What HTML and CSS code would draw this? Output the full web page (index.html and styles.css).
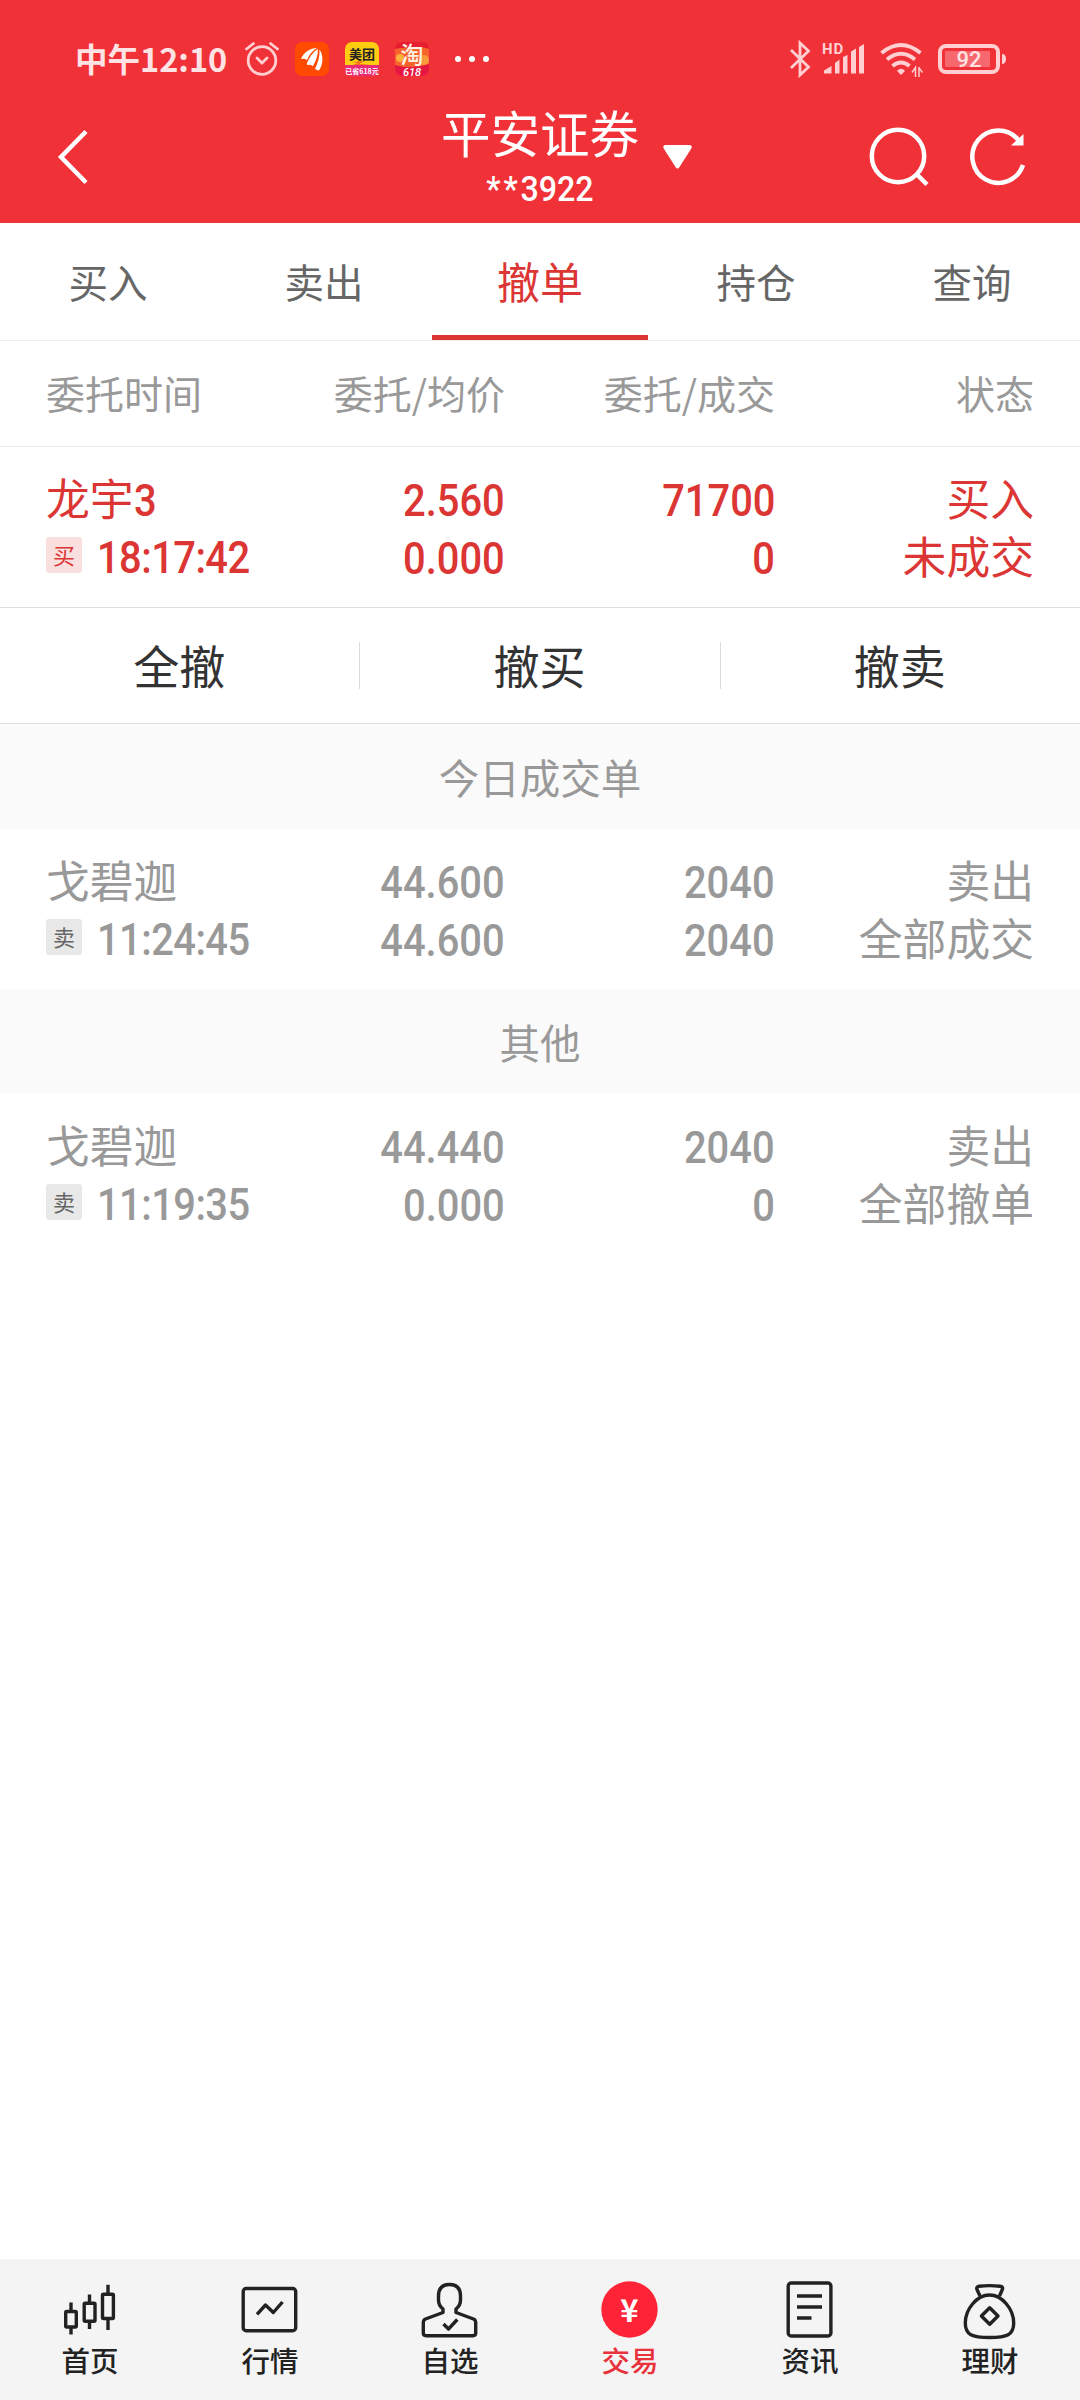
FILE: index.html
```html
<!DOCTYPE html>
<html lang="zh-CN">
    <head>
        <meta charset="utf-8">
        <title>平安证券</title>
        <link rel="stylesheet" href="styles.css">
    </head>
    <body>

        <div class="app">

            <header class="header">

                <div class="status-bar">
                    <span class="clock">中午12:10</span>

                    <svg class="alarm" width="36" height="36" viewBox="0 0 36 36">
                        <circle cx="18" cy="19.500" r="13.800"/>
                        <path d="M2.500 8 L9.500 2.500 M33.500 8 L26.500 2.500 M13 17 L18 22 L23 17"/>
                    </svg>

                    <svg class="app-icon" width="34" height="34" viewBox="0 0 34 34">
                        <rect width="34" height="34" rx="7" fill="#ff4a00"/>
                        <path d="M6 17 C9 10 15 6 22 6 C17 9 14 13 12 18 Q9 16 6 17 Z M12 21 C15 14 19 9 23 7 C23 13 21 19 18 24 Q15 22 12 23 Z M20 27 C23 21 25 14 24.500 7.500 C28 12 29 21 24 28.500 Q22 28 20 27 Z" fill="#fff"/>
                    </svg>

                    <svg class="app-icon" width="34" height="34" viewBox="0 0 34 34">
                        <rect width="34" height="34" rx="7" fill="#fc1"/>
                        <path d="M0 23 H34 V27 Q34 34 27 34 H7 Q0 34 0 27 Z" fill="#e92a76"/>
                        <path d="M7 20 L20 19 L14 22 L26 23 H8 L13 21 Z" fill="#f26a1c"/>
                        <text x="17" y="17" class="mt-name">美团</text>
                        <text x="17" y="32" class="mt-sale">已省618元</text>
                    </svg>

                    <svg class="app-icon" width="34" height="34" viewBox="0 0 34 34">
                        <rect width="34" height="34" rx="7" fill="#f7632c"/>
                        <path d="M0 7 Q0 0 7 0 H27 Q34 0 34 7 L26 5 L6 6 Z" fill="#e71d30"/>
                        <circle cx="5" cy="16" r="4" fill="#fbb03c"/>
                        <circle cx="29" cy="18" r="5" fill="#fb9a3c"/>
                        <path d="M0 23 Q17 28 34 22 V27 Q34 34 27 34 H7 Q0 34 0 27 Z" fill="#e51740"/>
                        <text x="17" y="21" class="tb-name">淘</text>
                        <text x="17" y="33.500" class="tb-sale">618</text>
                    </svg>

                    <div class="more"><i></i><i></i><i></i></div>

                    <div class="status-right">
                        <svg class="bluetooth" width="22" height="36" viewBox="0 0 22 36">
                            <path d="M2 9 L19.500 26 L11 34 V2 L19.500 10 L2 27"/>
                        </svg>

                        <svg class="signal" width="42" height="36" viewBox="0 0 42 36">
                            <text x="-1" y="12.500">HD</text>
                            <path d="M1 32.500 V29.500 L8.500 25 V32.500 Z M12 32.500 V22 L16.500 18.500 V32.500 Z M20 32.500 V16 L24.500 14 V32.500 Z M28 32.500 V10.500 L33 7.500 V32.500 Z M36 32.500 V6 L41 3 V32.500 Z"/>
                        </svg>

                        <svg class="wifi" width="44" height="36" viewBox="0 0 44 36">
                            <path d="M1.500 12 Q21 -4 40.500 12 M7 18.500 Q21 7 35 18.500 M12.500 25 Q21 18 29.500 25"/>
                            <path class="solid" d="M17 30 Q21 25.500 25 30 L21 34 Z"/>
                            <path class="thin" d="M35.500 36 V26.500 L32 31.500 M39 26 V36 M39 27 L42.500 31.500"/>
                        </svg>

                        <svg class="battery" width="69" height="32" viewBox="0 0 69 32">
                            <rect x="2" y="3" width="58" height="26" rx="6"/>
                            <rect class="charge" x="7" y="8" width="45" height="16" rx="1"/>
                            <path class="solid" d="M64 11 Q68 11 68 16 Q68 21 64 21 Z"/>
                            <text x="31" y="24">92</text>
                        </svg>
                    </div>
                </div>

                <div class="title-bar">
                    <div class="title-left">
                        <svg width="32" height="56" viewBox="0 0 32 56">
                            <path d="M29 2.500 L4 28 L29 53.500"/>
                        </svg>
                    </div>

                    <div class="title">
                        <h1 class="broker">平安证券</h1>
                        <p class="account"><span class="mask">**</span>3922</p>
                    </div>

                    <div class="title-right">
                        <svg class="caret" width="29" height="24" viewBox="0 0 29 24">
                            <path d="M2 0 H27 Q30 1 28 4 L16.500 22 Q14.500 25 12.500 22 L1 4 Q-1 1 2 0 Z"/>
                        </svg>
                        <svg class="search" width="60" height="60" viewBox="0 0 60 60">
                            <circle cx="29" cy="29" r="26.200"/>
                            <path d="M47.500 47 L58 57.500"/>
                        </svg>
                        <svg class="refresh" width="60" height="60" viewBox="0 0 60 60">
                            <path d="M54 38 A26 26.200 0 1 1 49 12.500"/>
                            <path class="solid" d="M54.500 7 V18.500 H42 Z"/>
                        </svg>
                    </div>
                </div>

            </header>

            <nav class="tabs">
                <a class="tab">买入</a>
                <a class="tab">卖出</a>
                <a class="tab tab-active">撤单</a>
                <a class="tab">持仓</a>
                <a class="tab">查询</a>
            </nav>

            <div class="columns">
                <span>委托时间</span>
                <span>委托/均价</span>
                <span>委托/成交</span>
                <span>状态</span>
            </div>

            <div class="order order-buy">
                <div class="cell">
                    <p>龙宇<b>3</b></p>
                    <p class="time"><i class="badge">买</i><b>18:17:42</b></p>
                </div>
                <div class="cell">
                    <p><b>2.560</b></p>
                    <p><b>0.000</b></p>
                </div>
                <div class="cell">
                    <p><b>71700</b></p>
                    <p><b>0</b></p>
                </div>
                <div class="cell">
                    <p>买入</p>
                    <p>未成交</p>
                </div>
            </div>

            <div class="actions">
                <button class="action">全撤</button>
                <button class="action">撤买</button>
                <button class="action">撤卖</button>
            </div>

            <h2 class="section">今日成交单</h2>

            <div class="order">
                <div class="cell">
                    <p>戈碧迦</p>
                    <p class="time"><i class="badge">卖</i><b>11:24:45</b></p>
                </div>
                <div class="cell">
                    <p><b>44.600</b></p>
                    <p><b>44.600</b></p>
                </div>
                <div class="cell">
                    <p><b>2040</b></p>
                    <p><b>2040</b></p>
                </div>
                <div class="cell">
                    <p>卖出</p>
                    <p>全部成交</p>
                </div>
            </div>

            <h2 class="section">其他</h2>

            <div class="order">
                <div class="cell">
                    <p>戈碧迦</p>
                    <p class="time"><i class="badge">卖</i><b>11:19:35</b></p>
                </div>
                <div class="cell">
                    <p><b>44.440</b></p>
                    <p><b>0.000</b></p>
                </div>
                <div class="cell">
                    <p><b>2040</b></p>
                    <p><b>0</b></p>
                </div>
                <div class="cell">
                    <p>卖出</p>
                    <p>全部撤单</p>
                </div>
            </div>

            <nav class="bottom-nav">
                <a class="nav-item">
                    <svg width="60" height="60" viewBox="0 0 60 60">
                        <path d="M11 24.500 V33 M11 49 V56.500 M29.500 16.500 V25 M29.500 43 V51 M48 6.700 V16 M48 41 V52"/>
                        <rect x="5.700" y="33.500" width="10.600" height="15.500" rx="1"/>
                        <rect x="24.200" y="25.200" width="10.800" height="18" rx="1"/>
                        <rect x="42.500" y="16.200" width="10.900" height="24.300" rx="1"/>
                    </svg>
                    <span>首页</span>
                </a>
                <a class="nav-item">
                    <svg width="60" height="60" viewBox="0 0 60 60">
                        <rect x="3.200" y="10.500" width="52.500" height="42.200" rx="3"/>
                        <path d="M17 36.300 L25.500 27 L33.300 34.500 L42.500 24"/>
                    </svg>
                    <span>行情</span>
                </a>
                <a class="nav-item">
                    <svg width="60" height="60" viewBox="0 0 60 60">
                        <path d="M36 34.500 V31 Q40.500 27.500 40.500 22 V18 Q40.500 6.500 29.500 6.500 Q18.500 6.500 18.500 18 V22 Q18.500 27.500 23 31 V34.500 L5.500 41 Q3.300 42 3.300 44.500 V55 Q3.300 57.700 6 57.700 H53 Q55.700 57.700 55.700 55 V44.500 Q55.700 42 53.500 41 Z"/>
                        <path d="M23.500 46 L28.500 51 L37.300 41.500"/>
                    </svg>
                    <span>自选</span>
                </a>
                <a class="nav-item nav-active">
                    <svg width="60" height="60" viewBox="0 0 60 60">
                        <circle cx="29.500" cy="31.500" r="28.200"/>
                        <text x="29.500" y="43.500">¥</text>
                    </svg>
                    <span>交易</span>
                </a>
                <a class="nav-item">
                    <svg width="60" height="60" viewBox="0 0 60 60">
                        <rect x="8.200" y="5" width="42.700" height="53" rx="3"/>
                        <path d="M17 18 H42 M17 29 H42 M17 40 H31.500"/>
                    </svg>
                    <span>资讯</span>
                </a>
                <a class="nav-item">
                    <svg width="60" height="60" viewBox="0 0 60 60">
                        <path d="M20 18 L17 11.500 Q16 8.800 19 8.300 Q29.500 7 40 8.300 Q43.500 8.800 42.300 11.500 L39.500 18"/>
                        <path d="M29.500 17 C17 17 5.300 31 5.300 45 C5.300 57 12 59.500 29.500 59.500 C47 59.500 53.700 57 53.700 45 C53.700 31 42 17 29.500 17 Z"/>
                        <path d="M29.700 29.700 L38 38 L29.700 46.300 L21.400 38 Z"/>
                    </svg>
                    <span>理财</span>
                </a>
            </nav>

        </div>

    </body>
</html>
```

FILE: styles.css
```css
*{
    margin: 0;
    padding: 0;
    box-sizing: border-box;
}

body{
    background: #fff;
    font-family: "Noto Sans CJK SC", sans-serif;
    color: #999;
}

svg{
    display: block;
    overflow: visible;
    fill: none;
}

h1, h2, i{
    font-weight: normal;
    font-style: normal;
}

.app{
    width: 1080px;
    min-height: 2400px;
    display: flex;
    flex-direction: column;
}

/* red header */

.header{
    height: 223px;
    background: #f13138;
    color: #fff;
}

.status-bar{
    height: 90px;
    padding: 28px 73px 0 75px;
    display: flex;
    align-items: center;
}

.clock{
    width: 169px;
    margin-top: -2px;
    font-size: 32.500px;
    font-weight: 700;
    line-height: 40px;
    color: #ffe3e4;
}

.alarm{
    stroke: #ffcfd1;
    stroke-width: 2.8;
    stroke-linecap: round;
    margin-right: 15px;
}

.app-icon{
    margin-right: 16px;
}

.mt-name{
    font-size: 13px;
    font-weight: 700;
    text-anchor: middle;
    fill: #222;
}

.mt-sale{
    font-size: 7px;
    font-weight: 700;
    text-anchor: middle;
    fill: #fff;
}

.tb-name{
    font-size: 23px;
    font-weight: 500;
    text-anchor: middle;
    fill: #fff3e6;
}

.tb-sale{
    font: italic 500 11px Roboto, sans-serif;
    text-anchor: middle;
    fill: #fff;
}

.more{
    display: flex;
    gap: 8px;
    margin-left: 10px;
}

.more i{
    width: 6px;
    height: 6px;
    border-radius: 50%;
    background: #fff;
}

.status-right{
    margin-left: auto;
    display: flex;
    align-items: center;
}

.bluetooth{
    stroke: #ffcfd1;
    stroke-width: 2.8;
    margin-right: 12px;
}

.signal{
    fill: #ffcfd1;
    margin-right: 15px;
}

.signal text{
    font: 700 15px Roboto, sans-serif;
    letter-spacing: 1px;
}

.wifi{
    stroke: #ffcfd1;
    stroke-width: 4;
    margin-right: 14px;
}

.solid{
    fill: #ffcfd1;
    stroke: none;
}

.wifi .thin{
    stroke-width: 1.5;
}

.battery{
    stroke: #ffcfd1;
    stroke-width: 4;
}

.battery .charge{
    fill: #f6686e;
    stroke: none;
}

.battery text{
    font: 500 22px Roboto, sans-serif;
    text-anchor: middle;
    fill: #ffe3e4;
    stroke: none;
}

.title-bar{
    height: 133px;
    display: grid;
    grid-template-columns: 1fr auto 1fr;
    align-items: center;
}

.title-left{
    padding-left: 57px;
}

.title-left svg, .title-right svg{
    stroke: #fff;
    stroke-width: 4.5;
}

.title{
    text-align: center;
}

.broker{
    padding-top: 6px;
    font-size: 49.500px;
    line-height: 60px;
}

.account{
    font: 500 35px/56px Roboto, sans-serif;
    transform: scaleX(.92);
}

.mask{
    letter-spacing: 3px;
}

.title-right{
    display: flex;
    align-items: center;
    padding: 0 51px 0 24px;
}

.title-right .caret{
    fill: #fff;
    stroke: none;
}

.search{
    margin-left: auto;
    margin-right: 40px;
}

.title-right .solid{
    fill: #fff;
    stroke: none;
}

/* tabs */

.tabs{
    height: 118px;
    display: flex;
    border-bottom: 1px solid #ececec;
}

.tab{
    flex: 1;
    font-size: 39.500px;
    line-height: 116px;
    text-align: center;
    color: #666;
}

.tab-active{
    font-size: 43px;
    line-height: 115px;
    color: #db3534;
    border-bottom: 5px solid #db3534;
}

/* order list */

.columns, .order{
    display: grid;
    grid-template-columns: 229px 230px 270px 259px;
    padding: 0 46px;
    text-align: right;
}

.columns{
    height: 106px;
    font-size: 39px;
    line-height: 103px;
    border-bottom: 1px solid #ececec;
}

.columns > :first-child, .cell:first-child{
    text-align: left;
}

.order{
    height: 160px;
    padding-top: 21px;
    font-size: 43.800px;
    line-height: 58px;
}

.cell p{
    height: 58px;
}

/* narrow figures */
.cell b{
    display: inline-block;
    font-family: Roboto, sans-serif;
    font-weight: 500;
    transform: scaleX(.91);
    transform-origin: right;
}

.cell:first-child b{
    transform-origin: left;
}

.order-buy{
    color: #db3534;
}

.time{
    display: flex;
    align-items: center;
    gap: 15px;
}

.time b{
    padding-top: 5px;
    letter-spacing: -.6px;
}

.badge{
    width: 36px;
    height: 36px;
    border-radius: 3px;
    background: #e8e8e8;
    color: #666;
    font-size: 22px;
    line-height: 34px;
    text-align: center;
}

.order-buy .badge{
    background: #fadfdf;
    color: #db3534;
}

.actions{
    height: 117px;
    display: flex;
    align-items: center;
    border-top: 1px solid #e0e0e0;
    border-bottom: 1px solid #e0e0e0;
}

.action{
    flex: 1;
    height: 47px;
    padding: 0 1px 2px 0;
    border: 0;
    background: none;
    font-family: inherit;
    font-size: 46px;
    line-height: 45px;
    color: #333;
}

.action + .action{
    border-left: 1px solid #dcdcdc;
}

.section{
    height: 105px;
    background: #fafafa;
    font-size: 40.500px;
    line-height: 105px;
    text-align: center;
}

/* bottom navigation */

.bottom-nav{
    height: 141px;
    margin-top: auto;
    padding-top: 19px;
    display: flex;
    background: #f4f4f4;
    color: #222;
}

.nav-item{
    flex: 1;
    display: flex;
    flex-direction: column;
    align-items: center;
    font-size: 28.500px;
    font-weight: 500;
    line-height: 43px;
}

.nav-item svg{
    stroke: #222;
    stroke-width: 3.4;
    stroke-linejoin: round;
}

.nav-active{
    color: #e8323c;
}

.nav-active svg{
    fill: #ff2337;
    stroke: none;
}

.nav-active text{
    font-size: 31px;
    font-weight: 700;
    text-anchor: middle;
    fill: #fff;
}
```
